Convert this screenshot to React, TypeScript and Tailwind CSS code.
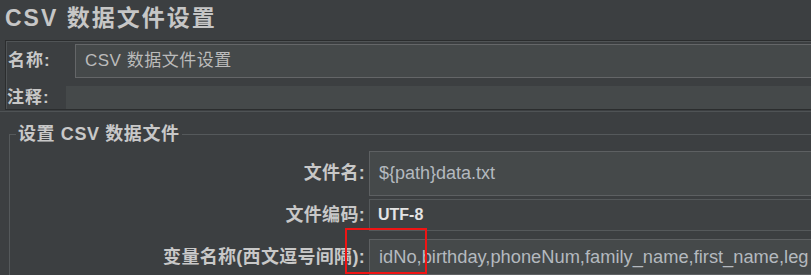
import React from "react";

const cjk = "font-['Liberation_Sans','Noto_Sans_CJK_SC',sans-serif]";

function FieldRow({
  label,
  children,
  className,
}: {
  label: string;
  children: React.ReactNode;
  className: string;
}) {
  return (
    <div className={`flex items-center ${className}`}>
      <div className="w-[355px] shrink-0 text-right text-[18px] font-bold tracking-[0.3px] text-[#c8c8c8]">
        {label}
      </div>
      <div className="ml-[4px] flex-1 h-full">{children}</div>
    </div>
  );
}

export default function App() {
  return (
    <div className={`relative w-[811px] h-[275px] overflow-hidden bg-[#3c3f41] text-[#bbbbbb] ${cjk}`}>
      <div className="w-[880px]">
        <h1 className="h-[40px] pl-[5px] pt-[3px] text-[23px] leading-[30px] font-bold tracking-[2px] text-[#c6c6c6]">
          CSV 数据文件设置
        </h1>

        <div className="ml-[5px] border border-[#2b2d2e] shadow-[inset_1px_1px_0_#505456]">
          <div className="flex items-center pt-[3px]">
            <span className="w-[69px] shrink-0 pl-[2px] text-[17px] font-bold tracking-[1px] text-[#c8c8c8]">
              名称:
            </span>
            <div className="flex-1 h-[34px] flex items-center border border-[#646668] bg-[#45494a] pl-[9px] text-[17px] tracking-[0.5px] text-[#bbbbbb]">
              CSV 数据文件设置
            </div>
          </div>
          <div className="mt-[8px] flex items-center h-[23px]">
            <span className="w-[60px] shrink-0 pl-[1px] text-[17px] font-bold tracking-[1px] text-[#c8c8c8]">
              注释:
            </span>
            <div className="flex-1 h-full bg-[#45494a]" />
          </div>
        </div>
        <div className="mt-[1px] h-px bg-[#4f5355]" />

        <fieldset className="ml-[9px] mt-[12px] border-t border-l border-[#55595b] pt-[7px]">
          <legend className="ml-[6px] px-[2px] text-[18px] leading-[20px] font-bold tracking-[0.6px] text-[#c8c8c8]">
            设置 CSV 数据文件
          </legend>
          <FieldRow label="文件名:" className="h-[45px]">
            <div className="h-full flex items-center border border-[#5d6062] bg-[#45494a] pl-[9px] text-[18px] text-[#b4b9bf]">
              {"${path}data.txt"}
            </div>
          </FieldRow>
          <FieldRow label="文件编码:" className="mt-[3px] h-[32px]">
            <div className="h-full flex items-center border border-[#55595b] bg-[#3f4244] pl-[8px] text-[16px] font-bold text-[#e4e4e4]">
              UTF-8
            </div>
          </FieldRow>
          <FieldRow label="变量名称(西文逗号间隔):" className="mt-[8px] h-[36px]">
            <div className="h-full flex items-center overflow-hidden border border-[#5d6062] bg-[#45494a] pl-[9px] text-[18.3px] whitespace-nowrap text-[#b4b9bf]">
              idNo,birthday,phoneNum,family_name,first_name,leg
            </div>
          </FieldRow>
        </fieldset>
      </div>

      <div className="absolute left-[345px] top-[228px] w-[82px] h-[46px] border-2 border-[#f01414]" />
    </div>
  );
}
